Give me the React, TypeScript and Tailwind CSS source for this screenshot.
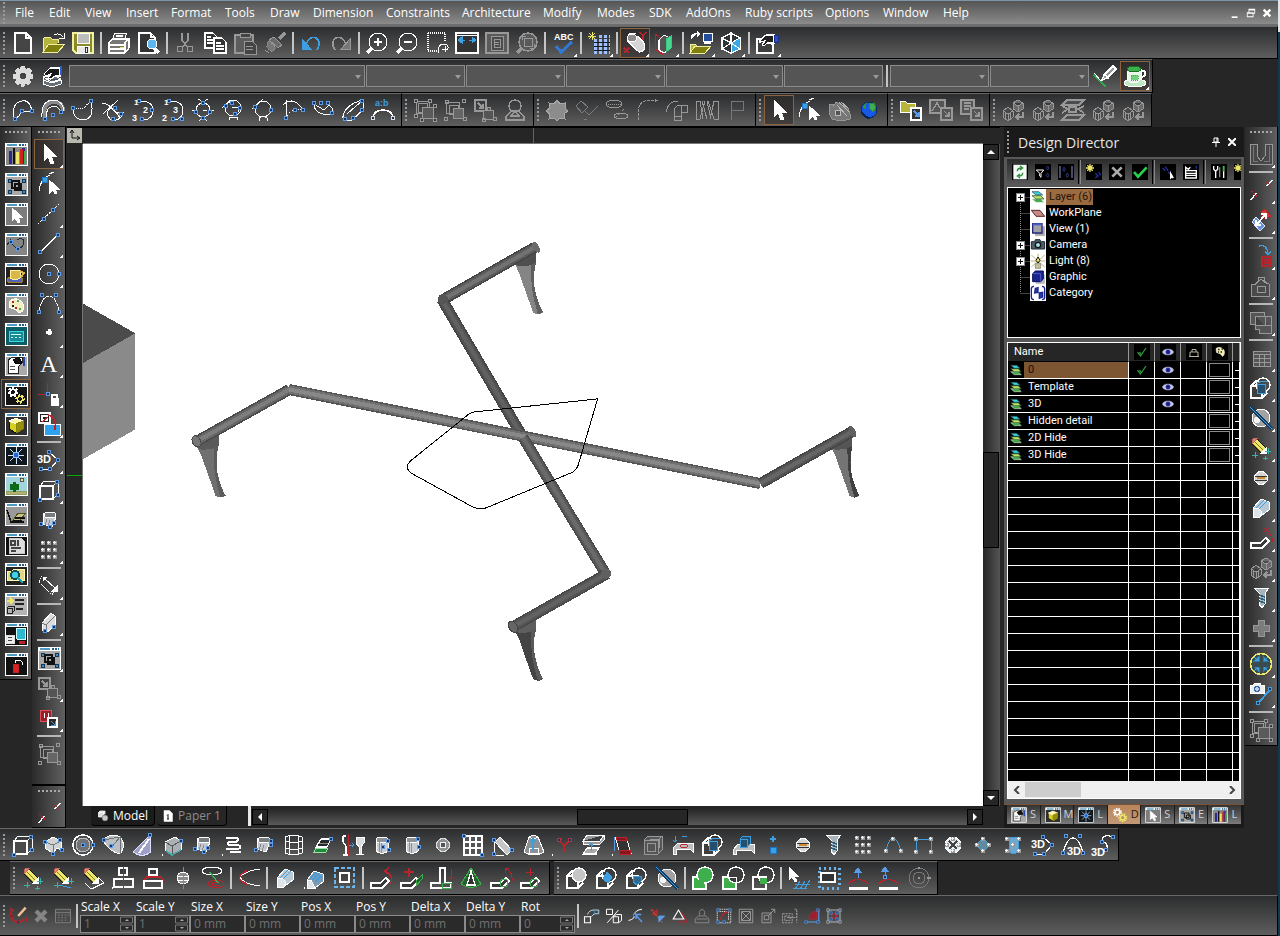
import type { ReactNode } from "react";

const BLUE = "#3d9fe0";
const NODE = "#5b9bea";
const GREY = "#989898";
const RED = "#b8242c";
const GREEN = "#3fae4c";
const YELLOW = "#ece66a";

function P({ d, c = "#fff", f = "none", w = 1, dash }: { d: string; c?: string; f?: string; w?: number; dash?: string }) {
  return <path d={d} stroke={c} fill={f} strokeWidth={w} strokeDasharray={dash} />;
}

// square handles, "x,y x,y"
function N({ p, c = NODE }: { p: string; c?: string }) {
  return (
    <>
      {p.split(" ").map((pair) => {
        const [x, y] = pair.split(",").map(Number);
        return <rect key={pair} x={x - 1.5} y={y - 1.5} width={3} height={3} fill="#16335c" stroke={c} />;
      })}
    </>
  );
}

function C({ x, y, r, c = "#fff", f = "none", w = 1 }: { x: number; y: number; r: number; c?: string; f?: string; w?: number }) {
  return <circle cx={x} cy={y} r={r} stroke={c} fill={f} strokeWidth={w} />;
}

function E({ x, y, rx, ry, c = "#fff", f = "none" }: { x: number; y: number; rx: number; ry: number; c?: string; f?: string }) {
  return <ellipse cx={x} cy={y} rx={rx} ry={ry} stroke={c} fill={f} />;
}

function T({ x, y, s = 9, c = "#fff", children }: { x: number; y: number; s?: number; c?: string; children: string }) {
  return (
    <text x={x} y={y} fontSize={s} fill={c} fontFamily="Liberation Sans, sans-serif" fontWeight={600}>
      {children}
    </text>
  );
}

function Win({ bg = "#9b9b9b", children }: { bg?: string; children?: ReactNode }) {
  return (
    <>
      <rect x={1} y={1} width={22} height={22} fill={bg} stroke="#fff" />
      <P d="M1 3h22" w={3} />
      <P d="M3 3h10" c="#4f9ac4" w={2} />
      <P d="M15 3h2M18 3h2M21 3h1" c="#235f88" w={2} />
      {children}
    </>
  );
}

function Group({ c = GREY, f = "#5a5a5a" }: { c?: string; f?: string }) {
  return (
    <>
      <P d="M3 3h13v12H3z" c={c} />
      <P d="M5 5h9v9H5z" c={c} />
      <P d="M9 9h11v11H9z" c={c} f={f} />
      <P d="M1 1h3v3H1zM15 1h3v3h-3zM1 16h3v3H1zM20 6h3v3h-3zM20 20h3v3h-3zM7 20h3v3H7z" c={c} f="#3a3a3a" />
    </>
  );
}

function Pencil() {
  return (
    <>
      <P d="M8 3L17 12L17 17L12 17L3 8Z" c="#111" f={YELLOW} />
      <P d="M6 6l9 9M4 8l9 9" c="#7d7a20" />
      <P d="M5 2h4l-6 6v-4z" c="#c9685e" f="#d8847a" />
      <P d="M17 12v5h-5z" f="#fff" />
    </>
  );
}

function Pluses() {
  return <P d="M6 16v6M3 19h6M19 12v6M16 15h6M16 20v4M14 22h5" c="#35b5a5" />;
}

function Blocks({ c = GREY }: { c?: string }) {
  return (
    <>
      <P d="M7 9l5 4v6l-5 4-5-4v-6zM2 13l5 3 5-3M7 16v7M4 14v6M9 14v6" c={c} f="#4a4a4a" />
      <P d="M17 2l5 3v6l-5 3-5-3V5zM12 5l5 3 5-3M17 8v6" c={c} f="#6a6a6a" />
      <P d="M22 14v5h-7M18 16l-3 3 3 3" c={c} w={2} />
    </>
  );
}

function Cyl({ nodes }: { nodes: string }) {
  return (
    <>
      <P d="M5 7v11q6 5 12 0V7" f="#c8ccd0" />
      <E x={11} y={7} rx={6} ry={3} f="#8b9298" />
      <P d="M8 9v10M10 10v10" c="#8b9298" />
      <N p={nodes} />
    </>
  );
}

function TiltCyl({ nodes }: { nodes: string }) {
  return (
    <>
      <P d="M7 5L19 9L15 19L6 16Z" f="#c4c8cc" />
      <E x={13} y={7} rx={6} ry={3} f="#767b80" />
      <P d="M10 11l-2 6M13 12l-2 6" c="#868b90" />
      <N p={nodes} />
    </>
  );
}

function CubeBall({ children, ball = "none" }: { children?: ReactNode; ball?: string }) {
  return (
    <>
      <P d="M2 10h11v12H2zM2 10l5-5h3M13 22l5-5" w={1.5} f="#3f3f3f" />
      <C x={14} y={9} r={7} f={ball} w={1.5} />
      {children}
    </>
  );
}

function Glass({ c = "#fff", f = "#d8dce0" }: { c?: string; f?: string }) {
  return <P d="M15 4h8v6l-3 4v7h3h-8h3v-7l-3-4z" c={c} f={f} />;
}

function Bar({ children, c = "#fff", f = "#3a3a3a" }: { children?: ReactNode; c?: string; f?: string }) {
  return (
    <>
      <P d="M2 17h9l6-5 3 3-7 7H2z" c={c} f={f} w={1.5} />
      {children}
    </>
  );
}

function Balls({ p }: { p: string }) {
  return (
    <>
      {p.split(" ").map((pair) => {
        const [x, y] = pair.split(",").map(Number);
        return (
          <g key={pair}>
            <circle cx={x} cy={y} r={2.5} fill="#9a9a9a" />
            <circle cx={x - 0.5} cy={y - 0.5} r={1.3} fill="#f2f2f2" />
          </g>
        );
      })}
    </>
  );
}

function Gear({ x, y, r, c }: { x: number; y: number; r: number; c: string }) {
  return (
    <>
      <circle cx={x} cy={y} r={r} fill="none" stroke={c} strokeWidth={r * 0.7} strokeDasharray="2 1.5" />
      <circle cx={x} cy={y} r={r * 0.7} fill="none" stroke={c} strokeWidth={r * 0.4} />
    </>
  );
}

function Layers() {
  return (
    <>
      <P d="M3 15h13l5 5H9z" c="#dfe8df" f="#3faa48" />
      <P d="M3 10h13l5 5H9z" c="#20402a" f="#b6e45e" />
      <P d="M3 4h10l6 5H9z" c="#20404a" f="#3ad0d8" />
    </>
  );
}

const ICONS: Record<string, ReactNode> = {
  new: <P d="M4 2h11l5 5v15H4zM15 2v5h5" f="#454545" w={1.5} />,
  open: (
    <>
      <P d="M2 20V8l2-2h5l2 2h6v4" c="#f0f0a0" f="#b5b53e" />
      <P d="M2 21l6-8h16l-7 8z" c="#f0f0a0" f="#80800f" />
      <P d="M13 4q5-3 9 2M23 2v5h-5" />
    </>
  ),
  save: (
    <>
      <P d="M2 2h20v20H5l-3-3z" c="#f0f0a0" f="#8a8a28" w={1.5} />
      <P d="M6 2h12v10H6z" f="#bdbdbd" />
      <P d="M6 15h12v7H6z" f="#e8e8e8" />
      <P d="M14 16h2v5h-2z" c="#333" />
    </>
  ),
  print: (
    <>
      <P d="M8 2h12l-3 7H5z" f="#555" />
      <P d="M2 11l4-3h16v9l-4 5H2zM2 14h16M2 18h16M18 11v11M18 11l4-3M9 5h7" f="#777" w={1.3} />
      <P d="M13 16h4" c={YELLOW} />
    </>
  ),
  preview: (
    <>
      <P d="M2 2h12l4 4v16H2zM14 2v4h4" f="#333" w={1.3} />
      <P d="M17 17l5 5" w={3} />
      <C x={15} y={13} r={5} f="#5db7ee" />
    </>
  ),
  cut: (
    <>
      <P d="M9 2v7l5 7M15 2v7l-5 7" c={GREY} w={1.5} />
      <C x={7} y={18} r={3} c={GREY} />
      <C x={17} y={18} r={3} c={GREY} />
    </>
  ),
  copy: (
    <>
      <P d="M2 2h8l4 4v11H2zM4 6h4M4 9h7M4 12h7" f="#333" w={1.3} />
      <P d="M11 7h8l4 4v11H11zM13 12h5M13 15h8M13 18h8" f="#333" w={1.3} />
    </>
  ),
  paste: (
    <>
      <P d="M2 4h18v18H2z" c={GREY} f="#5c5c5c" w={1.5} />
      <P d="M7 2h10v4H7z" c={GREY} f="#444" />
      <P d="M11 10h8l4 4v9H11zM13 15h7M13 18h7" c={GREY} f="#444" />
    </>
  ),
  brush: (
    <>
      <P d="M22 2l-6 6" c={GREY} w={3} />
      <P d="M11 6l8 8-4 3-9-8z" c={GREY} f="#6a6a6a" />
      <P d="M6 9l7 8-4 4-6-5z" c={GREY} f="#777" dash="1 1" />
      <P d="M2 19l4 3" c={GREY} dash="1 1" />
    </>
  ),
  undo: (
    <>
      <P d="M8 12q2-7 9-5q6 4 1 12" c={BLUE} w={1.5} />
      <P d="M3 8v10h9z" c={BLUE} f={BLUE} />
    </>
  ),
  redo: (
    <>
      <P d="M16 12q-2-7-9-5q-6 4-1 12" c={GREY} w={1.5} />
      <P d="M21 8v10h-9z" c={GREY} f="#777" />
    </>
  ),
  zoomin: (
    <>
      <P d="M7 17l-5 5" w={3} />
      <C x={13} y={11} r={9} />
      <P d="M13 7v8M9 11h8" w={1.3} />
    </>
  ),
  zoomout: (
    <>
      <P d="M7 17l-5 5" w={3} />
      <C x={13} y={11} r={9} />
      <P d="M9 11h8" w={1.3} />
    </>
  ),
  zoomwin: (
    <>
      <P d="M3 2h17v9M3 2v18h11" dash="1 1" w={1.3} />
      <P d="M13 22q0-9 5-9 6 0 5 5M17 18h6M20 15v6" />
    </>
  ),
  zoomext: (
    <>
      <P d="M1 2h22v20H1z" f="#333" w={1.5} />
      <P d="M1 4h22" />
      <P d="M3 9l4-3v6zM21 9l-4-3v6z" c={BLUE} f={BLUE} />
      <P d="M7 9h3M17 9h-3" c={BLUE} />
    </>
  ),
  zoompage: (
    <>
      <P d="M1 2h22v20H1z" c={GREY} f="#5a5a5a" w={2} />
      <P d="M6 5h12v14H6zM9 8h6v8H9zM10 11h4M10 13h4" c={GREY} f="#4b4b4b" />
    </>
  ),
  zoomsel: (
    <>
      <P d="M7 17l-5 5" c={GREY} w={3} />
      <C x={13} y={11} r={9} c={GREY} w={1.5} f="#5a5a5a" />
      <P d="M9 7h8v8H9zM7 9v-4h4M19 13v4h-4" c={GREY} />
    </>
  ),
  abc: (
    <>
      <T x={3} y={9} s={9}>ABC</T>
      <P d="M5 15l5 6L21 11" c="#2f78d8" w={3} />
    </>
  ),
  snapgrid: (
    <>
      <P d="M7 9h16M7 13h16M7 17h16M7 21h16" c="#9cc0ff" w={3} dash="3 2" />
      <P d="M12 5h11" c="#9cc0ff" w={3} dash="3 2" />
      <P d="M7 11h16M7 15h16M7 19h16" c="#10182c" />
      <P d="M5 1v8M1 5h8M2 2l6 6M8 2l-6 6" c={YELLOW} />
    </>
  ),
  paint: (
    <>
      <P d="M4 10l11-5 6 7q3 8-5 9z" f="#d5d5d5" w={1.3} />
      <E x={9} y={7} rx={5} ry={4} f="#8b8b8b" />
      <P d="M5 5q0-4 8-2" />
      <P d="M17 1l3 4 3-4M20 5v4M1 17l5 5M6 17l-5 5" c={RED} w={1.5} />
    </>
  ),
  section: (
    <>
      <P d="M2 3l7 5v15l-7-5z" c={RED} />
      <P d="M6 9l5-5 6 3v11l-6 4-5-3z" f="#555" w={1.3} />
      <P d="M13 8l5-3v12l-5 4z" c="#38c880" f="#46d890" />
    </>
  ),
  openpc: (
    <>
      <P d="M14 2h9v8h-9z" f="#244f9c" />
      <P d="M15 12h7" w={2} />
      <P d="M1 21v-8h5l2 2h9v6" c="#f0f0a0" f="#b5b53e" />
      <P d="M1 22l5-7h16l-6 7z" c="#f0f0a0" f="#80800f" />
      <P d="M2 8q0-6 6-5M8 0v6l3-3z" f="#fff" />
    </>
  ),
  cube: (
    <>
      <P d="M12 2l9 5v11l-9 4-9-4V7z" f="#2f3436" w={1.5} />
      <P d="M12 12l9-5v11l-9 4z" f="#3aa8e8" />
      <P d="M3 7l9 5M12 2v10M3 18l9-6 9 6" w={1.3} />
    </>
  ),
  hand: (
    <>
      <P d="M2 8h8l8 6v8H2z" w={1.5} f="#3f3f3f" />
      <P d="M5 9l6-5h8v8h-7l-3 3-2-1 3-4-5 1z" f="#222" w={1.3} />
      <P d="M19 4h4v7h-4z" c="#1c2d8a" f="#2850b8" />
    </>
  ),
  gear: (
    <path
      d="M10 2h4l1 3 3-1.500 3 3L19.500 9.500 22 10.500v4l-3 1 1 3-2.500 2.500-3-1-1 2.500h-3l-1-2.500-3 1L4 18.500l1-3-3-1v-4l3-1L3.500 6.500l3-3 2.500 1.500zM12 9a3 3 0 1 0 0.010 0z"
      fill="#dcdcdc"
      fillRule="evenodd"
    />
  ),
  pages: (
    <>
      <P d="M2 13l11-2 7 4-9 3zM2 13v3l9 3 9-3M2 17v3l9 3 9-3v-4" f="#667079" />
      <P d="M3 10l6-6h10v8h-5l-4 3-3-1 3-4-5 2z" f="#1a1a1a" w={1.3} />
      <P d="M20 2v9" c="#2c5ad0" w={2} />
    </>
  ),
  mark: (
    <>
      <P d="M1 11l12 12" c="#2fa448" w={1.5} />
      <P d="M9 16l2-5 9-9 3 3-9 9zM12 11l4 3" f="#999" w={1.5} />
      <P d="M1 9l7 8" />
    </>
  ),
  cup: (
    <>
      <E x={12} y={19} rx={11} ry={4} f="#bfe8c4" />
      <P d="M4 5q8-5 14 0v8q-1 6-7 6t-7-6z" f="#e9f7ea" />
      <E x={11} y={5} rx={7} ry={3} c="#157026" f={GREEN} />
      <P d="M18 7q6-1 4 4l-4 3" w={2} />
      <P d="M8 11h7v5H8z" c={GREEN} f="#73d07c" dash="1 1" />
    </>
  ),
  arc1: (
    <>
      <P d="M3 21Q0 11 6 5q12-7 15 8H11l-3 5-4 3" />
      <N p="4,21 11,13 21,13" />
    </>
  ),
  arc2: (
    <>
      <P d="M4 19Q1 6 12 4q10 0 10 9" w={4} c="#8a8a8a" />
      <P d="M1 19Q0 2 13 2q9 1 10 11M6 19q-2-9 6-11 5 0 7 5" />
      <N p="4,21 12,17 20,14" />
    </>
  ),
  arc3: (
    <>
      <P d="M2 10q0 12 11 12Q24 20 20 3" />
      <P d="M3 10h10l7-8" dash="1 1" />
      <N p="2,10 20,3" />
    </>
  ),
  arc4: (
    <>
      <P d="M1 5q10 1 18 15M2 16L17 2M23 14h-9l-4-4q-7 4-1 11 8 4 13-5" />
      <N p="12,21 20,16 14,10" />
    </>
  ),
  arc5: (
    <>
      <P d="M8 3q14 0 14 9t-9 10" />
      <N p="8,3 21,12 11,21" />
      <T x={3} y={7} s={8}>1</T>
      <T x={12} y={15} s={9}>2</T>
      <T x={1} y={23} s={9}>3</T>
    </>
  ),
  arc6: (
    <>
      <P d="M8 3q14 0 14 9t-9 10" />
      <N p="8,3 21,21 12,21" />
      <T x={3} y={7} s={8}>1</T>
      <T x={12} y={15} s={9}>3</T>
      <T x={1} y={23} s={9}>2</T>
    </>
  ),
  arc7: (
    <>
      <C x={12} y={12} r={7} />
      <P d="M1 12h5M18 12h5M7 1l5 3M17 1l-5 3M12 12h4M8 23l4-4 4 4" />
      <N p="12,5 5,14 19,14 12,20" />
    </>
  ),
  arc8: (
    <>
      <C x={12} y={10} r={8} />
      <P d="M1 10L11 2M8 22v-3h8v3M11 9h6v5" />
      <N p="5,8 11,5 19,10 14,16" />
    </>
  ),
  arc9: (
    <>
      <C x={12} y={11} r={8} />
      <P d="M8 23v-3l2-1M16 23v-3l-2-1M1 11L12 1" />
      <N p="4,9 20,12" />
    </>
  ),
  arc10: (
    <>
      <P d="M2 7Q13-3 22 12M5 2v18" />
      <P d="M5 20q5-12 17-8" dash="1 1" />
      <N p="5,20 14,12 22,12" />
    </>
  ),
  arc11: (
    <>
      <P d="M3 6q0 8 9 10 9 1 10-2 0-4-4-7l-5 5z" />
      <N p="3,5 10,5 17,5 21,15" />
    </>
  ),
  arc12: (
    <>
      <P d="M22 2v10L11 22q-10 2-9-4Q5 6 22 2L6 16" />
      <N p="21,3 21,12 12,20 4,21" />
    </>
  ),
  arc13: (
    <>
      <P d="M2 21q0-9 10-9t10 9" w={1.5} />
      <N p="2,20 22,20" c="#ddd" />
      <T x={4} y={8} s={9} c={BLUE}>a:b</T>
    </>
  ),
  group: <Group />,
  group2: (
    <>
      <P d="M3 4h13v11H3zM6 7h9v9H6z" c={GREY} />
      <P d="M10 10h10v10H10z" c={GREY} f="#666" />
      <P d="M2 2h3v3H2zM19 1h3v3h-3zM1 19h3v3H1zM20 19h3v3h-3z" c={GREY} />
    </>
  ),
  group3: (
    <>
      <P d="M2 2h11v11H2zM5 5l5 5M10 6v4H6" c={GREY} w={1.5} />
      <P d="M10 12h10v9H10zM14 9h3v3h-3zM20 19h3v3h-3zM9 20h3v3H9z" c={GREY} f="#555" />
    </>
  ),
  stamp: (
    <>
      <C x={12} y={8} r={6} c={GREY} w={1.5} />
      <P d="M3 19l5-6h8l5 6v3H3zM8 18l4-5 4 5z" c={GREY} w={1.5} />
    </>
  ),
  star: <P d="M12 2l3 4 5-1v5l3 3-4 3 1 5-5-1-3 3-3-3-5 1 1-5-4-3 4-3-1-5 5 1z" c="#aaa" f="#8c8c8c" />,
  rect45: <P d="M1 8l5-5 7 6-6 6zM23 8l-9 9-5-5 M9 21h3" c="#7c7c7c" />,
  ellipses: (
    <>
      <E x={9} y={6} rx={8} ry={4} c={GREY} />
      <E x={16} y={18} rx={7} ry={3} c={GREY} />
      <P d="M3 6h14M10 20l9-9" c={GREY} dash="1 1" />
    </>
  ),
  fillet: <P d="M3 22v-9Q4 3 14 2h9M20 1v4" c={GREY} dash="3 1" />,
  elbow: <P d="M1 14Q3 3 13 3M9 22v-9q1-6 7-6h6v7h-6v8zM9 18h7M16 7v7" c={GREY} />,
  coil: <P d="M1 3h4l3 18M1 3v18h4M7 3l5 18M12 3l4 18M23 3h-4l-4 18M23 3v18h-4l-6-18M10 3L5 21" c={GREY} />,
  flag: <P d="M6 22V3h12v9H6" c="#777" />,
  arrow: <P d="M7 2v17l4-4 3 7 3-1-3-7h5z" f="#fff" />,
  nodearrow: (
    <>
      <P d="M2 19q1-12 11-16" />
      <P d="M12 8v14l4-4 2 4 2-1-2-4h4z" f="#fff" />
      <P d="M5 5h5v5H5z" c="#1a78cc" f={BLUE} />
      <P d="M12 2l5-2" />
    </>
  ),
  handgrab: (
    <>
      <P d="M2 6h4v3l3-5 12 6 2 6v5q-10 3-18 0L2 15z" c={GREY} f="#777" />
      <P d="M12 4l10 10M14 4l7 6M10 7l10 11" c="#bbb" />
      <C x={11} y={15} r={3} c="#bbb" f="#555" />
    </>
  ),
  globe: (
    <>
      <C x={12} y={12} r={8} c="#102a6a" f="#1858e8" />
      <P d="M12 5h5l2 5-3 4-3-3zM6 8l3-2-1 5z" c="#2c8a3a" f={GREEN} />
      <P d="M5 14q3 6 8 6" c="#0a2458" w={2} />
    </>
  ),
  flayer: (
    <>
      <P d="M1 14V3h5l2 2h8v9z" c="#fff" f="#b9b53a" />
      <P d="M12 10h10v12H12z" w={1.5} f="#333" />
      <P d="M15 13l5 5M20 14v4h-4" c={NODE} w={1.5} />
    </>
  ),
  fimage: (
    <>
      <P d="M1 2h15v13H1zM3 13l5-8 5 8" c={GREY} w={1.5} f="#555" />
      <P d="M12 10h11v12H12zM15 13l5 5M20 14v4h-4" c={GREY} f="#555" w={1.3} />
    </>
  ),
  fpage: (
    <>
      <P d="M2 2h13v14H2zM5 5h7M5 8h7M5 11h5" c={GREY} w={1.5} f="#555" />
      <P d="M12 10h11v12H12zM15 13l5 5M20 14v4h-4" c={GREY} f="#555" w={1.3} />
    </>
  ),
  blocks: <Blocks />,
  slabs: <P d="M6 2h17l-5 5H1zM6 17h17l-5 5H1zM1 8l6 3-6 4M23 8l-6 3 6 4M8 9h7v5H8z" c={GREY} w={1.5} f="#4d4d4d" />,

  // palette windows on the far left
  wbars: (
    <Win bg="#8a8a8a">
      <P d="M6 22V9M19 22V6" c="#2a2a90" w={3} />
      <P d="M10 22V6" c="#111" w={2} />
      <P d="M13 22V10" c={YELLOW} w={3} />
      <P d="M17 22V7" c="#c22" w={3} />
      <P d="M21 22V9" c={GREEN} w={2} />
    </Win>
  ),
  wgroup: (
    <Win bg="#a8a8a8">
      <P d="M4 7h3v3H4zM18 7h3v3h-3zM4 18h3v3H4zM18 18h3v3h-3z" c="#10385a" f="#4f8ab8" />
      <P d="M8 9h7v7H8zM11 12h6v6h-6z" c="#111" w={1.5} />
    </Win>
  ),
  warrow: (
    <Win bg="#7d7d7d">
      <P d="M8 6v13l3-3 3 5 2-1-2-5h4z" f="#fff" />
    </Win>
  ),
  wnodes: (
    <Win bg="#858585">
      <P d="M6 10l8 8M3 13l4-6M13 8q6-3 7 1 0 5-5 8" c="#1a2a40" />
      <N p="7,10 14,17" />
    </Win>
  ),
  wcup: (
    <Win bg="#222">
      <E x={11} y={18} rx={8} ry={3} c="#a67c28" f="#5064b8" />
      <P d="M6 8h10v8q-5 3-10 0z" c="#fff0a0" f="#d8b848" />
      <P d="M16 9l4 2-3 4" c="#d8b848" w={2} />
    </Win>
  ),
  wpalette: (
    <Win bg="#a0a0a0">
      <P d="M6 9q6-5 12 1 5 8-3 11l-3-3-7-3z" c="#fff" f="#f2efc4" />
      <P d="M8 10h2M11 16h2" c={RED} w={2} />
      <P d="M13 9h2M15 17h2" c={GREEN} w={2} />
      <P d="M8 14h2" c="#222" w={2} />
    </Win>
  ),
  wsheet: (
    <Win bg="#0b5e66">
      <P d="M5 9h14v10H5z" c="#3cd8e0" f="#178c96" />
      <P d="M7 12h10M7 15h2M11 15h2M15 15h2" c="#d2ffff" />
    </Win>
  ),
  wdoc: (
    <Win bg="#aaa">
      <P d="M4 8l5-3h9v6l-4 4v6H4z" c="#222" f="#fff" />
      <P d="M9 8l6-3 3 6-6 1z" c="#000" f="#111" />
      <P d="M6 14h5M6 17h5" c="#555" />
      <P d="M20 5v9" c="#2548a8" w={2} />
    </Win>
  ),
  wgears: (
    <Win bg="#141414">
      <Gear x={9} y={10} r={4} c="#fff" />
      <Gear x={16} y={17} r={3.5} c={YELLOW} />
    </Win>
  ),
  gears: (
    <>
      <Gear x={8} y={8} r={5} c="#fff" />
      <Gear x={16} y={16} r={5} c={YELLOW} />
    </>
  ),
  wcube: (
    <Win bg="#303030">
      <P d="M12 6l7 3v8l-7 4-7-4V9z" c="#111" f="#d8d020" />
      <P d="M5 9l7 3 7-3-7-3z" c="#fff" f="#fff7a0" />
      <P d="M12 12l7-3v8l-7 4z" c="#8a8408" f="#96900c" />
    </Win>
  ),
  wstar: (
    <Win bg="#101820">
      <P d="M12 5v17M4 13h16M6 7l12 12M18 7L6 19" c="#cfe4ff" />
      <C x={12} y={13} r={3} c="#8fc2ff" f="#2468d0" />
    </Win>
  ),
  wtree: (
    <Win bg="#a4d4dc">
      <P d="M2 19h20v3H2z" c="#8aa060" f="#b8b070" />
      <P d="M10 20v-10M7 12v4h6v-4" c="#0f6a1a" w={3} />
      <C x={18} y={8} r={2} c="#555" f={YELLOW} />
    </Win>
  ),
  wroad: (
    <Win bg="#9a9a9a">
      <P d="M8 20l6-9h8l-8 9z" c="#554f20" f="#c9c286" />
      <P d="M3 8l4 12h13M11 16h10M9 19h9" c="#111" w={1.5} />
    </Win>
  ),
  wpage: (
    <Win bg="#111">
      <P d="M5 6h12l3 3v12H5z" c="#ccc" f="#ddd" />
      <P d="M7 9h4v4H7zM14 8v6M7 16h10M7 19h5" c="#444" w={1.5} />
    </Win>
  ),
  wfind: (
    <Win bg="#222">
      <P d="M3 18V9h5l2-2h10v11z" c="#fff8b0" f="#e0d888" />
      <C x={11} y={13} r={4} c="#144a5a" f="#40d0e0" w={2} />
      <P d="M14 16l5 5" c="#1da0b0" w={2} />
    </Win>
  ),
  wlist: (
    <Win bg="#b4b4b4">
      <P d="M3 9h6M6 6l3 3-3 3" c={YELLOW} w={2} />
      <P d="M11 8h9M11 12h9M12 17h7" c="#222" w={1.5} />
      <P d="M3 16h5v5H3zM3 16l2-2h5v5l-2 2" c="#222" />
    </Win>
  ),
  wmix: (
    <Win bg="#111">
      <P d="M12 6h9v11h-8z" c="#cff" f="#30b8d0" />
      <P d="M2 13h8v8H2z" c="#ddd" f="#eee" />
      <P d="M4 15h4M4 18h4" c="#444" />
      <P d="M15 19h5v2h-5z" c={RED} f={RED} />
    </Win>
  ),
  wcan: (
    <Win bg="#111">
      <P d="M9 12h5v8H9z" c={RED} f="#e02020" />
      <P d="M11 11V8h5l2 2v3" c="#fff" />
    </Win>
  ),

  // drawing tools
  line1: (
    <>
      <P d="M1 22L23 1" dash="2 1" />
      <N p="7,17 16,8" />
    </>
  ),
  line2: (
    <>
      <P d="M3 20L21 3" w={1.5} />
      <N p="3,20 21,3" />
    </>
  ),
  circle: (
    <>
      <C x={12} y={12} r={10} />
      <N p="12,12 22,12" />
    </>
  ),
  curve: (
    <>
      <P d="M2 19Q5 4 12 4t10 15" dash="4 1" />
      <N p="2,20 22,20 5,3 19,3" />
    </>
  ),
  point: <P d="M12 7v6M9 10h6" w={3} />,
  text: <text x={3} y={20} fontSize={24} fill="#fff" fontFamily="Liberation Serif, serif">A</text>,
  lock: (
    <>
      <P d="M10 1v12M1 12h10" c={RED} />
      <N p="11,12" />
      <P d="M14 16h7v7h-7z" f="#fff" />
      <P d="M15 16v-3h5v3" w={1.5} />
    </>
  ),
  copyrect: (
    <>
      <P d="M7 12h16v11H7z" c="#fff" f="#2da2ee" />
      <P d="M2 1h11v10H2zM5 4h5v4H5z" f="#222" w={1.5} />
      <P d="M11 3q9 2 7 15M6 10l4-5" c={RED} w={1.5} />
    </>
  ),
  poly3d: (
    <>
      <P d="M12 4l9 8-8 9H4" />
      <N p="12,4 21,12 4,21 13,21" />
      <T x={0} y={15} s={11}>3D</T>
    </>
  ),
  box: (
    <>
      <P d="M3 8h13v13H3z" f="#4a4a4a" w={2} />
      <P d="M3 8l4-5h14v13l-5 5M16 8l5-5" />
      <N p="3,22 20,4 21,17" />
    </>
  ),
  tilt: <TiltCyl nodes="4,16 13,19 17,15" />,
  dots9: <Balls p="6,5 12,5 18,5 6,12 12,12 18,12 6,19 12,19 18,19" />,
  dim: (
    <>
      <P d="M2 8l3-6M2 8l13 13M21 12l-6 9" dash="2 1" />
      <P d="M7 4l12 11M6 3h4l-4 4zM20 17h-5l5-5z" f="#fff" />
    </>
  ),
  wall: (
    <>
      <P d="M5 13L14 3l4 3v10l-9 7-4-3z" f="#ddd" />
      <P d="M5 13l4 2 9-9M9 15v8" c="#777" />
      <N p="8,21 17,17" />
    </>
  ),
  swap: (
    <>
      <P d="M3 4h11v11H3z" c="#e05058" f="#98202a" />
      <P d="M7 7v5M11 7v5" />
      <P d="M11 12h9v9h-9z" f="#2a2a2a" w={1.3} />
      <P d="M14 15l4 4M18 15v4h-4" c={BLUE} />
    </>
  ),
  pins: (
    <>
      <P d="M23 2l-5 6M2 22l5-7" w={1.5} />
      <P d="M14 8l4-4 4 5M2 13l7 6" c={RED} w={1.3} dash="2 1" />
    </>
  ),

  // solids
  polybox: (
    <>
      <P d="M4 9l8-5 8 4v9l-4-2-4 5-7-4z" f="#cfd3d6" />
      <P d="M4 9l8 3 8-4M12 12v8" c="#777" />
      <N p="4,9 19,7 12,21 21,17" />
    </>
  ),
  sphere: (
    <>
      <C x={12} y={12} r={10} f="#4c4f52" w={1.5} />
      <C x={12} y={12} r={7} c="#bbb" f="#6e7275" />
      <N p="12,12 22,12" />
    </>
  ),
  fan: (
    <>
      <P d="M2 7q8-8 17-3 7 8 0 17-12-3-17-14z" f="#babfc2" />
      <P d="M2 7l17-3M10 15l9-11v17" c="#6a7074" />
      <N p="3,7 10,13" />
    </>
  ),
  cone: (
    <>
      <P d="M19 2L2 19q9 7 18 0z" c="#dfe0ff" f="#9ea0c8" />
      <P d="M18 6l-10 14" w={2} />
      <N p="19,2" />
    </>
  ),
  prism: (
    <>
      <P d="M4 9l10-5 6 4v9l-9 5-6-4z" f="#aab0b4" />
      <P d="M4 9l7 4 9-5M11 13v9" c="#555" />
      <P d="M5 18l6 4 9-5" c="#40a8a8" w={1.5} />
      <N p="20,8" />
      <P d="M1 22h1" w={2} />
    </>
  ),
  spring: (
    <>
      <P d="M5 5h10q5 1 0 4H8q-3 2 0 3h9q5 2 0 4H5M9 19h11" w={2} />
      <P d="M1 22h1" w={2} />
    </>
  ),
  tilt2: <TiltCyl nodes="20,8 5,17 20,12" />,
  barrel: <P d="M4 4q8-4 17 0v16q-8 4-17 0zM4 8q8 3 17 0M4 15q8 3 17 0M8 3v18M17 3v18" />,
  slab: (
    <>
      <P d="M5 14L10 6h10l-4 8z" f="#2a2a2a" w={1.3} />
      <P d="M3 19l2-4h12l-2 4z" c="#9fe0a8" f="#1f8a38" />
      <P d="M8 10h9" c="#888" />
      <N p="20,6" />
    </>
  ),
  glasses: (
    <>
      <P d="M2 3v6l3 4v9M2 22h6M2 3h3" w={1.3} />
      <P d="M7 1v22" c={RED} />
      <P d="M8 12h5M11 10l2 2-2 2" c={BLUE} />
      <Glass />
    </>
  ),
  cylcut: <Cyl nodes="17,8 12,14 18,17" />,
  cyl: <Cyl nodes="17,6 18,14" />,
  torus: (
    <>
      <C x={12} y={12} r={6.5} f="#8d9194" c="#ddd" />
      <C x={12} y={12} r={3} c="#eee" f="#555" />
    </>
  ),
  mesh: (
    <>
      <P d="M3 3h18v19H3zM3 9h18M3 15h18M9 3v19M15 3v19" w={1.3} f="#555" />
      <N p="3,3 21,22" />
    </>
  ),
  plate: (
    <>
      <P d="M4 9L9 4l12 13-5 5z" f="#c6c6c6" />
      <P d="M3 7v15h10" />
      <N p="3,7 3,21 21,17" />
    </>
  ),
  loft: (
    <>
      <P d="M8 4q4-3 9 0l6 15q-10 6-20 0z" f="#8d9194" />
      <P d="M8 4q4 3 9 0M8 15h9v5H8z" />
      <P d="M12 18V7M10 9l2-3 3 3" c={BLUE} w={2} />
    </>
  ),
  branch: (
    <>
      <P d="M13 19v-6L9 8M13 13l5-5M11 6H8v3M17 6h3v3" c={RED} w={1.5} />
      <N p="8,7 19,7" c="#b0334a" />
      <P d="M1 22h1" w={2} />
    </>
  ),
  stack: (
    <>
      <P d="M6 2h17l-4 6H2zM2 8v3h17l4-4V2" f="#999" />
      <P d="M6 15h12l-4 6H2zM2 21h14" f="#aaa" w={1.3} />
      <P d="M10 18v-7M8 13l2-3 2 3" c={BLUE} />
    </>
  ),
  redpara: (
    <>
      <P d="M4 4h11l5 16H9z" f="#333" />
      <P d="M5 4h10l1 3H6z" c={RED} f="#83161f" />
      <P d="M8 17h11l1 4H9z" c={RED} f="#83161f" />
      <P d="M3 4v14" c={NODE} />
      <P d="M1 22h1" w={2} />
    </>
  ),
  wirebox: (
    <>
      <P d="M3 7l4-4h14v14l-4 4H3z" c={GREY} f="#555" />
      <P d="M3 7h14v14M17 7l4-4M6 10h8v8H6zM9 6h9v9" c={GREY} />
    </>
  ),
  punch: (
    <>
      <P d="M2 21v-6l5-5h15v9l-3-3H5v5z" f="#bdbdbd" />
      <E x={13} y={13} rx={4} ry={1.5} c={RED} />
      <P d="M4 3v6M2 7l2 2 2-2M11 3h5" c={BLUE} />
    </>
  ),
  cubes: (
    <CubeBall>
      <P d="M8 8h8v9H8zM8 8l4-3h7" c={BLUE} f="#24506e" />
    </CubeBall>
  ),
  emboss: (
    <>
      <P d="M2 21v-4l5-6h16v9l-3-3H5v4z" f="#bdbdbd" />
      <P d="M9 6h7v8H9zM9 6l3-3h7v8l-3 3" c={BLUE} f="#24506e" />
    </>
  ),
  bluept: (
    <>
      <P d="M12 3v6M9 6h6" c={BLUE} w={1.3} />
      <P d="M9 14h6v6H9z" c="#1876c4" f={BLUE} />
    </>
  ),
  slotball: (
    <>
      <C x={12} y={12} r={6.5} f="#d4d4d4" />
      <P d="M6 10h12M6 14h12" c="#333" />
      <P d="M8 12h8" c="#d08a38" w={1.5} />
    </>
  ),
  screw: (
    <>
      <P d="M5 2h15l-4 5v11l-3 4-3-4V7z" f="#a8b4bc" />
      <P d="M10 9l6 2M10 12l6 2M10 15l6 2" c="#2d5e78" w={1.5} />
    </>
  ),
  balls3: (
    <>
      <P d="M5 18Q8 5 12 5t8 13" c={BLUE} />
      <Balls p="5,18 12,6 20,18" />
    </>
  ),
  balls4: (
    <>
      <P d="M5 19V6h15v13" c={BLUE} />
      <Balls p="5,6 20,6 5,19 20,19" />
    </>
  ),
  balls5: (
    <>
      <C x={12} y={12} r={8} f="#e4f2f6" />
      <P d="M8 8l8 8M16 8l-8 8" c="#444" w={2} />
      <Balls p="12,6 6,12 18,12 12,18" />
    </>
  ),
  balls6: (
    <>
      <P d="M12 5l7 7-7 7-7-7z" c={BLUE} f="#5f8ba0" />
      <Balls p="12,6 6,12 18,12 12,18" />
    </>
  ),
  balls7: (
    <>
      <P d="M8 5q5-2 9 0v14q-5 3-9 0z" c={BLUE} f="#6fa8cc" />
      <Balls p="6,6 18,6 12,12 6,18 18,18" />
    </>
  ),
  curve3d: (
    <>
      <P d="M2 19Q6 5 12 5t10 14" w={1.3} />
      <N p="5,3 19,3 2,20 22,20" />
      <T x={6} y={22} s={11}>3D</T>
    </>
  ),
  spiral3d: (
    <>
      <P d="M22 4q-10-4-11 4 8 3 4 10" w={1.3} />
      <N p="22,4 11,9 15,17" />
      <T x={0} y={23} s={11}>3D</T>
    </>
  ),

  // editing
  pen1: (
    <>
      <Pencil />
      <Pluses />
    </>
  ),
  pen2: (
    <>
      <Pencil />
      <P d="M8 19l12 3" c={BLUE} />
      <P d="M6 16v6M3 19h6M20 12v6M17 15h6" c="#35b5a5" />
    </>
  ),
  pen3: (
    <>
      <P d="M4 17l6 6 13-6-5-5" w={1.3} />
      <Pencil />
    </>
  ),
  align: (
    <>
      <P d="M8 2h8v7H8zM3 13h19v8H3z" w={1.5} />
      <P d="M12 0v24" c={RED} />
      <P d="M1 22h1" w={2} />
    </>
  ),
  align2: (
    <>
      <P d="M8 3h8v6H8zM3 15h18v7H3z" w={1.5} />
      <P d="M5 11h15l3 4M3 14l3-3" c={RED} w={1.5} />
    </>
  ),
  rotball: (
    <>
      <C x={12} y={12} r={6} f="#8c8c8c" />
      <P d="M6 10h12M6 14h12" />
      <P d="M12 1v22" c={BLUE} dash="5 1" />
    </>
  ),
  rings: (
    <>
      <E x={11} y={5} rx={10} ry={4} />
      <E x={15} y={18} rx={8} ry={4} c={RED} />
      <E x={15} y={18} rx={4} ry={2} c={RED} />
      <P d="M9 6l8 11" c={GREEN} w={1.5} />
    </>
  ),
  hyper: (
    <>
      <P d="M23 3Q8 5 3 11q3 7 20 9" />
      <P d="M10 5Q-5 12 10 18" c={RED} w={1.5} />
    </>
  ),
  chamf: (
    <>
      <P d="M4 12l8-9 8 3v8l-8 6-8 1z" f="#b8c8d4" />
      <P d="M7 12l8-8M10 13l8-8" c={BLUE} />
      <P d="M4 12h5l4 4-2 5H4z" f="#dfe4e8" />
    </>
  ),
  chamf2: (
    <>
      <P d="M4 14l7-9 9 3v8l-8 6z" f="#7e98b2" />
      <P d="M8 12l5-6M10 14l6-7M12 16l6-6" c={BLUE} w={1.5} />
      <P d="M4 14h4l4 8H4z" f="#dfe4e8" />
      <P d="M1 22h1" w={2} />
    </>
  ),
  frame: (
    <>
      <P d="M2 2h19v19H2z" c="#6cb6f0" w={2} dash="4 2" />
      <P d="M7 7h9v9H7z" w={2} />
    </>
  ),
  bend1: (
    <Bar>
      <P d="M22 18q3-9-6-13M20 2l-4 3 3 3" c={RED} w={1.5} />
    </Bar>
  ),
  bend2: (
    <Bar>
      <P d="M10 2v9M5 6h10" c={RED} w={1.5} />
      <P d="M17 20l6-7v-4l-6 6z" c={GREEN} f="#1e5a2a" />
    </Bar>
  ),
  bend3: (
    <>
      <P d="M2 17h9V2h5v15h6v5H2z" w={1.5} />
      <P d="M13 17h9v5h-9z" c={GREEN} />
      <P d="M22 3v10M20 11l2 2 2-2" c={RED} />
    </>
  ),
  cone2: (
    <>
      <P d="M12 2L2 18q10 7 20 0z" c={GREEN} f="#21632e" />
      <P d="M12 5L8 19h8z" f="#333" w={1.3} />
    </>
  ),
  bend4: (
    <Bar>
      <C x={15} y={17} r={4} c={GREEN} />
      <P d="M23 15q1-9-6-12M20 2l-4 1 1 4" c={RED} />
    </Bar>
  ),
  bend5: (
    <Bar>
      <C x={15} y={17} r={4} c={GREEN} />
      <P d="M11 2v8M7 6h8" c={RED} />
    </Bar>
  ),
  bool1: <CubeBall ball="#c6c6c6" />,
  bool2: (
    <CubeBall>
      <P d="M12 6l5 5-4 6-5-4z" c={BLUE} f={BLUE} />
    </CubeBall>
  ),
  bool3: (
    <CubeBall>
      <P d="M8 10h8v5l-4 4-4-3z" c={BLUE} f="#2c6a94" />
    </CubeBall>
  ),
  cutball: (
    <>
      <C x={12} y={12} r={9} f="#a2a2a2" />
      <circle cx={8} cy={14} r={3} fill="#f4f4f4" />
      <P d="M1 1l22 22" c="#143a60" w={3} />
      <P d="M1 1l22 22" c={BLUE} />
    </>
  ),
  add: (
    <>
      <P d="M2 11h13v12H2z" f={GREEN} w={1.5} />
      <C x={14} y={9} r={8} f={GREEN} w={1.5} />
      <P d="M3 14h9v7H3z" c={GREEN} f={GREEN} />
    </>
  ),
  sub: (
    <>
      <P d="M2 11h13v12H2z" f={GREEN} w={1.5} />
      <C x={15} y={9} r={8} f="#3c3c3c" w={1.5} />
      <P d="M8 11h7v5" />
    </>
  ),
  inter: (
    <>
      <P d="M2 11h13v12H2z" w={1.5} />
      <C x={15} y={9} r={8} w={1.5} />
      <P d="M9 12h6v5H9z" c={GREEN} f={GREEN} />
    </>
  ),
  pickface: (
    <>
      <P d="M2 1v13l3-3 3 5 2-1-3-5h4z" f="#fff" />
      <P d="M8 18h15M6 22h14M8 23l5-8M13 23l5-8M18 22l5-8" c={BLUE} />
    </>
  ),
  frame2: (
    <>
      <P d="M2 2h20v20H2z" c="#6cb6f0" w={3} dash="2 3" />
      <P d="M4 7h14v9H4z" f="#333" w={2} />
    </>
  ),
  push1: (
    <>
      <P d="M2 22h19" w={3} />
      <P d="M1 18q10-9 21 0" c={RED} w={1.3} dash="4 1" />
      <P d="M11 12V3M8 6l3-4 3 4z" c={NODE} f={NODE} />
    </>
  ),
  push2: (
    <>
      <P d="M2 22h19" w={3} />
      <P d="M1 18q10-9 21 0" c={RED} w={1.3} dash="4 1" />
      <P d="M8 12V3M5 5l3-4 3 4z" c={NODE} f={NODE} />
      <N p="8,11" />
    </>
  ),
  target: (
    <>
      <C x={12} y={12} r={10} c="#777" />
      <C x={12} y={12} r={6} c="#777" />
      <P d="M11 12h2M20 12h4M12 1v2" c="#999" w={2} />
    </>
  ),

  // right hand toolbar
  ushape: (
    <>
      <P d="M1 2h7v12l4 5 4-5V2h7v20H1z" c={GREY} f="#484848" />
      <P d="M4 4v15h5M20 4v15h-5" c="#777" />
    </>
  ),
  split: (
    <>
      <P d="M3 14l4-5 9 9-5 5z" c="#dfe8ff" f="#6a94dc" />
      <P d="M12 4l4-3 6 7-6 3z" c={RED} f="#d23a30" />
      <P d="M8 16l8-9M12 6h5v5M7 12v5h5" w={2} />
    </>
  ),
  rectrot: (
    <>
      <P d="M13 13h9v9h-9zM16 16h3v3h-3z" c={RED} w={1.5} />
      <P d="M10 2q8-2 9 8M16 7l3 4 3-4" c={BLUE} w={1.3} />
    </>
  ),
  house: <P d="M2 10h5l2-3v-4h6v4l5 3v12H2zM8 12h8v6H8zM6 10l6-5 6 5" c={GREY} f="#4a4a4a" />,
  copies: <P d="M1 2h14v4h7v17H10v-4H6v-5H1zM6 6h10v9h6M6 6v9h10" c={GREY} f="#555" />,
  table: (
    <>
      <P d="M4 5h17v15H4z" c={GREY} f="#555" />
      <P d="M4 8h17M10 8v12M15 8v12M4 12h17M4 16h17" c={GREY} />
    </>
  ),
  bar: (
    <Bar>
      <P d="M23 16q1-7-5-9M15 2l5 4M20 2l-5 4" c={RED} w={1.3} />
    </Bar>
  ),
  plus: <P d="M9 4h6v5h5v6h-5v5H9v-5H4V9h5z" c={GREY} f="#7c7c7c" />,
  collapse: (
    <>
      <C x={12} y={12} r={10.5} c={YELLOW} f="#3a4c50" w={1.5} />
      <P d="M5 9h5V4zM14 4v5h5zM5 15h5v5zM14 20v-5h5z" c="#2a7ca8" f={BLUE} />
      <P d="M5 5l4 4M19 5l-4 4M5 19l4-4M19 19l-4-4" c={BLUE} />
    </>
  ),
  camera: (
    <>
      <P d="M1 3h3l2-2h5l1 2h3v8H1z" f="#eee" />
      <C x={8} y={7} r={2.5} c="#3868a8" f="#c0d0e8" w={1.5} />
      <P d="M10 20L21 8" c={BLUE} w={2} />
      <N p="9,21 21,7" c={BLUE} />
    </>
  ),

  // status row
  snap: (
    <>
      <P d="M4 4q-5 8 1 13 8 6 13-2" c={RED} w={2} />
      <P d="M1 3l5 3M20 13l1 6" c={RED} w={2} />
      <P d="M20 2l-9 10" c="#f0c090" w={3} />
      <N p="11,19 3,12" c={RED} />
    </>
  ),
  cross: <P d="M6 6l12 12M18 6L6 18" c="#858585" w={5} />,
  sheet: <P d="M3 4h18v16H3zM3 8h18M6 11h2M10 11h2M14 11h2M18 11h2M6 14h2M10 14h2M14 14h2M6 17h2M10 17h2M14 17h2" c="#858585" f="#4a4a4a" />,
  s1: (
    <>
      <P d="M2 13h8v8H2z" w={1.5} />
      <P d="M6 10q2-6 9-6h6v5h-6l-4 4" />
      <P d="M15 3v8M20 3v6" c={BLUE} />
    </>
  ),
  s2: <P d="M2 3h8v7H2zM11 13h7v8h-7zM11 13l4-3h7v8l-4 3M3 21L18 4" w={1.3} />,
  s3: (
    <>
      <P d="M2 18q9-2 8-8 1-6 10-7" w={1.3} />
      <P d="M12 11l8 9M12 16v-6h7" c={NODE} w={2} />
      <N p="10,11" />
    </>
  ),
  s4: (
    <>
      <P d="M3 2l8 8M5 10h6V4z" c={RED} f={RED} w={2} />
      <P d="M13 12h8l-8 8z" c={NODE} f={NODE} />
      <P d="M3 4l16 18" c="#e0a040" dash="2 2" />
    </>
  ),
  s5: (
    <>
      <P d="M10 4l7 12H3z" w={1.5} />
      <P d="M15 8l7 12H9" c={RED} w={1.5} />
    </>
  ),
  s6: <P d="M12 3q5 2 3 7l6 6v5H3v-5l6-6q-2-5 3-7zM5 16h14M8 12h8" c={GREY} />,
  s7: (
    <>
      <P d="M3 3h18v18H3zM6 6h12v12" dash="2 1" />
      <P d="M8 17q0-9 10-11" c={RED} w={2} />
      <N p="4,4 20,4 4,20 12,20" />
    </>
  ),
  s8: <P d="M3 3h18v18H3zM6 6h12v12H6zM6 6l12 12M18 6L6 18" c={GREY} w={1.3} />,
  s9: <P d="M4 8h12v13H4zM7 11h6v6H7zM12 12l9-9M16 3h5v5" c={GREY} w={1.3} />,
  s10: <P d="M2 9h13v12H2zM5 12h7v6H5zM8 14h13v-8M18 3h3v18" c={GREY} w={1.3} dash="3 1" />,
  s11: (
    <>
      <P d="M3 20h18V4" c={NODE} w={1.5} />
      <P d="M8 16q1-9 10-11v11z" c={RED} f="#9c1c30" />
      <N p="4,20 20,20 20,4" />
    </>
  ),
  s12: (
    <>
      <P d="M4 4h16v16H4z" c="#ddd" />
      <P d="M9 9h6v6H9z" c={RED} w={2} />
      <N p="4,4 20,4 4,20 20,20" c="#bbb" />
      <N p="8,8 16,8 8,16 16,16" />
    </>
  ),

  // design director
  refresh: (
    <>
      <rect x={2} y={1} width={20} height={22} fill="#f4fbf4" />
      <P d="M8 11q0-5 6-5M12 3l4 3-4 3M16 13q0 5-6 5M12 15l-4 3 4 3" c="#2e8a3c" w={2} />
    </>
  ),
  filter: (
    <>
      <P d="M2 9h11l-4 5v6l-2-2v-4z" w={1.5} />
      <P d="M19 3l2 3-2 3-2-3zM19 14l2 3-2 3-2-3z" c="#4450b0" />
    </>
  ),
  filter2: (
    <>
      <P d="M3 3v18M21 3v18" c="#8894d0" w={1.5} />
      <P d="M9 5l2 3-2 3-2-3zM14 14l2 3-2 3-2-3z" c="#4a58c8" />
    </>
  ),
  sun: (
    <>
      <P d="M6 0v12M0 6h12M2 2l8 8M10 2l-8 8" c={YELLOW} w={2} />
      <P d="M14 14l4 4-4 3M19 12l3 5" c="#26309a" w={2} />
    </>
  ),
  delx: <P d="M5 5l14 14M19 5L5 19" c="#aaa" w={4} />,
  ok: <P d="M3 12l6 7L22 5" c="#28d050" w={4} />,
  pick: (
    <>
      <P d="M4 6l4 4M8 4l4 6M12 12l3 3" c="#26309a" w={2} />
      <P d="M16 14v7l2-2 2 2z" f="#fff" w={2} />
    </>
  ),
  list: (
    <>
      <P d="M4 10h16v11H4zM4 14h16M4 17h16M4 10V5l4 3 3-3" w={2} />
      <P d="M20 3v4" c="#26309a" w={2} />
    </>
  ),
  tools: (
    <>
      <P d="M4 3v5l3 3v10M10 3v5l-3 3" w={2} />
      <P d="M13 5v15" c="#888" w={2} />
      <P d="M19 3v8" c={GREEN} w={3} />
      <P d="M19 11v10" w={2} />
    </>
  ),
  layers: <Layers />,
  workplane: <P d="M2 8h13l7 9H9z" c="#5a2a2a" f="#c48a8a" w={1.5} />,
  view: (
    <>
      <P d="M8 8h14v14H8z" c="#aaa" f="#aaa" />
      <P d="M4 4h14v14H4z" c="#23287c" f="#a0a0a8" w={2} />
      <P d="M4 5h14" c="#4c5acc" w={3} />
    </>
  ),
  tcamera: (
    <>
      <P d="M2 7h5l1-3h7l1 3h6v11H2z" c="#1c2a34" f="#4c5e6a" w={1.5} />
      <C x={12} y={12} r={4} c="#111" f="#a8dce8" w={2} />
    </>
  ),
  light: (
    <>
      <P d="M12 1v22M2 3l20 18M22 3L2 21M1 12h22" c="#9a9638" />
      <P d="M12 6l3 5-3 4-3-4z" c="#111" f={YELLOW} w={1.5} />
      <P d="M8 16h8v7H8z" c="#777" f="#c4c29c" />
    </>
  ),
  graphic: (
    <>
      <P d="M9 9h13v13H9z" c="#bbb" f="#bbb" />
      <P d="M4 7l4-4h12v12l-4 4H4z" c="#0a1060" f="#1a2590" w={1.5} />
      <P d="M4 7h12v12" c="#6a78d8" />
    </>
  ),
  category: (
    <>
      <P d="M6 2q-4 0-4 4v12q0 4 4 4M18 2q4 0 4 4v12q0 4-4 4" c="#1a2590" w={2} />
      <P d="M8 5l4-1v7l-5 1zM14 12l5-1v7l-5 2z" c="#1a2590" f="#2c3aa8" w={2} />
    </>
  ),
  eye: (
    <>
      <E x={12} y={12} rx={11} ry={6} c="#a8a8d0" f="#c8c8e4" />
      <C x={12} y={12} r={4} c="#2028a0" f="#141880" w={2} />
    </>
  ),
  tick: <P d="M3 12l6 8L20 4M7 12l3 4" c="#2f9c3c" w={2.5} />,
  padlock: <P d="M4 12h16v9H4zM8 12V7h8v5M2 21h3M19 21h3" c="#b8b0a0" w={2} />,
  palette: (
    <>
      <P d="M4 5q9-6 16 3 3 9-3 13l-4-5-8-3z" c="#fff" f="#f2e8a8" />
      <P d="M8 7h3M13 12h3M8 12h2M15 6h3" c="#222" w={3} />
    </>
  ),
  boxes: (
    <>
      <P d="M3 5l3-3h10v7M3 5h10v9H3z" f="#ddd" w={1.5} />
      <C x={16} y={16} r={6} f="#c8c8c8" c="#555" />
    </>
  ),
  sheet1: (
    <>
      <P d="M4 1h11l6 6v16H4z" f="#fff" />
      <P d="M12 9v9M10 11l2-2M10 18h4" c="#111" w={2} />
    </>
  ),
};

function Icon({ name, className = "size-6" }: { name: string; className?: string }) {
  return (
    <svg viewBox="0 0 24 24" className={`${className} shrink-0`} aria-hidden="true">
      {ICONS[name]}
    </svg>
  );
}

// "^" marks a fly-out tool and "*" the active one
function Tool({ id }: { id: string }) {
  const name = id.replace(/[\^*]/g, "");
  const active = id.includes("*");
  return (
    <button
      aria-label={name}
      className={`size-[30px] shrink-0 border ${active ? "border-[#8a6440] bg-[#2e2a28]/60" : "border-transparent"}`}
    >
      <svg viewBox="0 0 28 28" className="size-7" shapeRendering="crispEdges" aria-hidden="true">
        <g transform="translate(2 2)">{ICONS[name]}</g>
        {id.includes("^") && <path d="M28 24v4h-4z" fill="#fff" />}
      </svg>
    </button>
  );
}

function Grip({ vertical = false }: { vertical?: boolean }) {
  return vertical ? (
    <div className="mb-1 mt-1 flex h-1 w-full shrink-0 justify-center">
      <div className="w-[22px] border-t-2 border-dotted border-[#a8a8a8]" />
    </div>
  ) : (
    <div className="mr-[3px] h-[22px] w-[5px] shrink-0 border-r-2 border-dotted border-[#9a9a9a]" />
  );
}

function Tools({ ids, vertical = false }: { ids: string; vertical?: boolean }) {
  return (
    <>
      {ids.split(" ").map((id, i) =>
        id === "|" ? (
          <div
            key={i}
            className={vertical ? "my-[2px] h-[2px] w-6 shrink-0 bg-[#b8b8b8]" : "mx-[2px] h-[22px] w-[2px] shrink-0 bg-[#c4c4c4]"}
          />
        ) : (
          <Tool key={i} id={id} />
        ),
      )}
    </>
  );
}

const BAR =
  "flex h-full items-center border-r border-b border-t border-r-black border-b-black border-t-[#686868] bg-linear-to-b from-[#2c2d2e] to-[#5e5e5e]";
const SIDE = "flex flex-col items-center border-r border-b border-black bg-linear-to-r from-[#2b2b2b] to-[#606060]";

function ToolBar({ ids, className = "pr-[3px]" }: { ids: string; className?: string }) {
  return (
    <div role="toolbar" className={`${BAR} ${className}`}>
      <Grip />
      <Tools ids={ids} />
    </div>
  );
}

const MENU = [
  { label: "File", width: "w-[34px]" },
  { label: "Edit", width: "w-9" },
  { label: "View", width: "w-[41px]" },
  { label: "Insert", width: "w-[45px]" },
  { label: "Format", width: "w-[54px]" },
  { label: "Tools", width: "w-[45px]" },
  { label: "Draw", width: "w-[43px]" },
  { label: "Dimension", width: "w-[73px]" },
  { label: "Constraints", width: "w-[76px]" },
  { label: "Architecture", width: "w-[81px]" },
  { label: "Modify", width: "w-[54px]" },
  { label: "Modes", width: "w-[52px]" },
  { label: "SDK", width: "w-[37px]" },
  { label: "AddOns", width: "w-[59px]" },
  { label: "Ruby scripts", width: "w-20" },
  { label: "Options", width: "w-[58px]" },
  { label: "Window", width: "w-[60px]" },
  { label: "Help", width: "w-10" },
];

const COMBOS = [
  { label: "Layer", width: "w-[296px]" },
  { label: "Color", width: "w-[99px]" },
  { label: "Pattern", width: "w-[99px]" },
  { label: "Weight", width: "w-[99px]" },
  { label: "Style", width: "w-[117px]" },
  { label: "Pen", width: "w-[99px]" },
];

const FIELDS = [
  { label: "Scale X", value: "1", spin: true },
  { label: "Scale Y", value: "1", spin: true },
  { label: "Size X", value: "0 mm" },
  { label: "Size Y", value: "0 mm" },
  { label: "Pos X", value: "0 mm" },
  { label: "Pos Y", value: "0 mm" },
  { label: "Delta X", value: "0 mm" },
  { label: "Delta Y", value: "0 mm" },
  { label: "Rot", value: "0", spin: true },
];

const TREE = [
  { icon: "layers", label: "Layer (6)", open: true, selected: true },
  { icon: "workplane", label: "WorkPlane" },
  { icon: "view", label: "View (1)" },
  { icon: "tcamera", label: "Camera", open: true },
  { icon: "light", label: "Light (8)", open: true },
  { icon: "graphic", label: "Graphic" },
  { icon: "category", label: "Category" },
];

const LAYERS = [
  { name: "0", active: true, visible: true },
  { name: "Template", visible: true },
  { name: "3D", visible: true },
  { name: "Hidden detail" },
  { name: "2D Hide" },
  { name: "3D Hide" },
];

const PANEL_TABS = [
  { icon: "wdoc", label: "S" },
  { icon: "wcube", label: "M" },
  { icon: "wstar", label: "L" },
  { icon: "gears", label: "D", active: true },
  { icon: "warrow", label: "S" },
  { icon: "wgroup", label: "E" },
  { icon: "wbars", label: "L" },
];

function Combo({ label, width }: { label: string; width: string }) {
  return (
    <div className={`relative mr-px h-[22px] shrink-0 ${width}`}>
      <select aria-label={label} disabled className="h-full w-full appearance-none border border-[#8c8c8c] bg-[#555]">
        <option></option>
      </select>
      <svg viewBox="0 0 6 4" className="absolute right-1 top-[10px] h-1 w-[6px]" aria-hidden="true">
        <path d="M0 0h6L3 4z" fill="#9a9a9a" />
      </svg>
    </div>
  );
}

function ScrollButton({ label, d }: { label: string; d: string }) {
  return (
    <button aria-label={label} className="flex size-4 shrink-0 items-center justify-center border border-black bg-[#262626]">
      <svg viewBox="0 0 8 8" className="size-2" aria-hidden="true">
        <path d={d} fill="#fff" />
      </svg>
    </button>
  );
}

function Pipe({ d, tones }: { d: string; tones: [string, string, string] }) {
  return (
    <g fill="none" strokeLinejoin="round">
      <path d={d} stroke={tones[0]} strokeWidth={11} />
      <path d={d} stroke={tones[1]} strokeWidth={8} />
      <path d={d} stroke={tones[2]} strokeWidth={4} />
    </g>
  );
}

function Leg({ x, y, fill, side, cap }: { x: number; y: number; fill: string; side: string; cap: string }) {
  return (
    <g transform={`translate(${x} ${y})`}>
      <path d="M515 264L536 260Q532 280 536 294Q539 305 543 312Q539 316 533 312Q527 295 523 284Q520 273 515 264Z" fill={fill} />
      <path d="M531 264L536 262Q532 280 536 294Q539 305 543 312L538 314Q530 290 531 264Z" fill={side} />
      <path d="M514 264L536 252L536 262Q530 267 518 266Z" fill={cap} />
    </g>
  );
}

function Model() {
  return (
    <svg
      viewBox="83 144 900 661"
      preserveAspectRatio="xMidYMid slice"
      shapeRendering="crispEdges"
      className="h-full w-full"
      role="img"
      aria-label="Model view"
    >
      <path d="M83 303L136 333L83 363Z" fill="#4b4b4b" />
      <path d="M83 363L136 333V429L83 459Z" fill="#8a8a8a" />
      <Leg x={0} y={0} fill="#858585" side="#5f5f5f" cap="#4f4f4f" />
      <Leg x={-317} y={183} fill="#707070" side="#5c5c5c" cap="#5a5a5a" />
      <Leg x={316} y={183} fill="#747474" side="#404040" cap="#555" />
      <Leg x={0} y={366} fill="#444" side="#5a5a5a" cap="#5e5e5e" />
      <Pipe d="M197 441L290 389" tones={["#4a4a4a", "#666", "#7d7d7d"]} />
      <Pipe d="M535 247L442 300" tones={["#454545", "#5c5c5c", "#727272"]} />
      <Pipe d="M442 299L523 437" tones={["#454545", "#535353", "#616161"]} />
      <Pipe d="M289 389L760 483" tones={["#555", "#707070", "#888"]} />
      <Pipe d="M760 483L852 431" tones={["#454545", "#555", "#666"]} />
      <Pipe d="M523 437L606 574" tones={["#4a4a4a", "#5a5a5a", "#6a6a6a"]} />
      <Pipe d="M607 573L513 626" tones={["#484848", "#555", "#626262"]} />
      <circle cx="443" cy="299" r="5" fill="#555" />
      <circle cx="606" cy="573" r="5" fill="#606060" />
      <ellipse cx="197" cy="441" rx="4" ry="6" fill="#777" stroke="#4a4a4a" transform="rotate(-30 197 441)" />
      <ellipse cx="513" cy="626" rx="4" ry="6" fill="#666" stroke="#444" transform="rotate(-30 513 626)" />
      <ellipse cx="536" cy="247" rx="3" ry="6" fill="#6a6a6a" transform="rotate(-30 536 247)" />
      <ellipse cx="852" cy="431" rx="3" ry="6" fill="#606060" transform="rotate(-30 852 431)" />
      <path
        d="M475 411.500L597.500 398.500L578 465Q576 470 572 472L487 507Q480 510 472 506L412 473Q404 468 410 461L466 416Q470 412 475 411.500Z"
        fill="none"
        stroke="#000"
      />
    </svg>
  );
}

function Canvas() {
  return (
    <main className="grid min-w-0 flex-1 grid-cols-[16px_1fr_17px] grid-rows-[16px_1fr_22px] border-t border-black bg-[#262626]">
      <button aria-label="Origin" className="size-[15px] bg-[#b9b9b0]">
        <svg viewBox="0 0 15 15" className="size-[15px]" aria-hidden="true">
          <path d="M5 3v7h7M3 5l2-3 2 3M10 8l3 2-3 2" fill="none" stroke="#111" />
        </svg>
      </button>
      <div className="flex justify-center border-b border-[#777]">
        <div className="w-px bg-[#00a800]" />
      </div>
      <div />
      <div className="flex flex-col justify-center border-r border-[#777]">
        <div className="h-px bg-[#00a800]" />
      </div>
      <div className="min-h-0 min-w-0 overflow-hidden bg-white">
        <Model />
      </div>
      <div className="flex min-h-0 flex-col bg-linear-to-r from-[#262626] to-[#555]">
        <ScrollButton label="Scroll up" d="M0 6l4-4 4 4z" />
        <div className="flex flex-1 flex-col justify-center pt-[50px]">
          <div className="h-24 w-4 border border-black bg-[#262626]" />
        </div>
        <ScrollButton label="Scroll down" d="M0 2l4 4 4-4z" />
      </div>
      <div />
      <div className="flex items-start">
        <div role="tablist" className="flex w-[165px] shrink-0 items-start gap-[2px] pl-2 text-[12px] leading-[18px]">
          <button role="tab" aria-selected="true" className="flex h-5 w-16 items-center gap-1 rounded-b border-b border-r border-black bg-[#1b1b1b] pl-[6px] text-white">
            <Icon name="boxes" className="size-3" />
            Model
          </button>
          <button role="tab" aria-selected="false" className="flex h-5 w-[70px] items-center gap-1 rounded-b border-b border-r border-black pl-[5px] text-[#8c8c8c]">
            <Icon name="sheet1" className="size-3" />
            Paper 1
          </button>
        </div>
        <div className="h-5 w-[3px] shrink-0 bg-[#e8e8e8]" />
        <div className="ml-px mt-[3px] flex h-4 flex-1 bg-linear-to-b from-[#262626] to-[#5a5a5a]">
          <ScrollButton label="Scroll left" d="M6 0L2 4l4 4z" />
          <div className="flex flex-1 justify-center">
            <div className="ml-[30px] h-4 w-[111px] border border-black bg-[#262626]" />
          </div>
          <ScrollButton label="Scroll right" d="M2 0l4 4-4 4z" />
        </div>
      </div>
      <div />
    </main>
  );
}

function PanelTools({ ids }: { ids: string }) {
  return (
    <div className="flex h-[26px] items-center overflow-hidden bg-linear-to-b from-[#2c2c2c] to-[#5a5a5a] pl-px">
      {ids.split(" ").map((id, i) =>
        id === "|" ? (
          <div key={i} className="mx-px h-6 w-[3px] shrink-0 border-l border-r border-l-black border-r-[#888]" />
        ) : (
          <button key={i} aria-label={id} className="flex h-6 w-[23px] shrink-0 items-center justify-center">
            <span className="flex size-4 items-center justify-center bg-black">
              <Icon name={id} className="size-4" />
            </span>
          </button>
        ),
      )}
    </div>
  );
}

const CELL = "h-[17px] overflow-hidden border-b border-r border-white p-0";
const HEAD = "h-[19px] border-r border-b border-black border-r-[#999] bg-[#262626] p-0 font-normal";

function LayerTable() {
  const blanks = Array.from({ length: 30 });
  return (
    <table className="w-full table-fixed border-separate border-spacing-0 text-left text-white">
      <colgroup>
        <col className="w-[121px]" />
        <col className="w-[26px]" />
        <col className="w-[26px]" />
        <col className="w-[26px]" />
        <col className="w-[26px]" />
        <col />
      </colgroup>
      <thead>
        <tr>
          <th className={`${HEAD} pl-[6px] pt-px`}>Name</th>
          {["tick", "eye", "padlock", "palette"].map((icon) => (
            <th key={icon} className={HEAD}>
              <span className="mx-auto flex size-4 items-center justify-center bg-black">
                <Icon name={icon} className="size-3" />
              </span>
            </th>
          ))}
          <th className={HEAD}></th>
        </tr>
      </thead>
      <tbody>
        {LAYERS.map((layer) => (
          <tr key={layer.name}>
            <td className={CELL}>
              <div className="flex h-4 items-center">
                <span className="flex w-4 shrink-0 justify-center">
                  <Icon name="layers" className="size-[14px]" />
                </span>
                <span className={`h-4 flex-1 pl-1 leading-4 ${layer.active ? "bg-[#7c5532] text-[#1c1006]" : ""}`}>{layer.name}</span>
              </div>
            </td>
            <td className={CELL}>{layer.active && <Icon name="tick" className="mx-auto size-3" />}</td>
            <td className={CELL}>{layer.visible && <Icon name="eye" className="mx-auto size-3" />}</td>
            <td className={CELL}></td>
            <td className={CELL}>
              <div className="mx-auto h-[14px] w-[21px] border border-[#8a8a8a]" />
            </td>
            <td className={CELL}>
              <div className="ml-[2px] h-px bg-white" />
            </td>
          </tr>
        ))}
        {blanks.map((_, i) => (
          <tr key={i}>
            <td className={CELL}></td>
            <td className={CELL}></td>
            <td className={CELL}></td>
            <td className={CELL}></td>
            <td className={CELL}></td>
            <td className={CELL}></td>
          </tr>
        ))}
      </tbody>
    </table>
  );
}

function DesignDirector() {
  return (
    <aside className="ml-1 flex w-[240px] shrink-0 flex-col bg-[#1a1a1a] font-['Roboto',sans-serif] text-[11px]">
      <div className="flex h-[30px] items-center pr-1">
        <Grip />
        <h2 className="ml-[6px] flex-1 font-['Open_Sans','Noto_Sans',sans-serif] text-[14px] text-[#e6e6e6]">Design Director</h2>
        <button aria-label="Pin" className="flex size-4 items-center justify-center">
          <svg viewBox="0 0 8 10" className="h-[10px] w-2" aria-hidden="true">
            <path d="M2 1h4v4H2zM0 5.500h8M4 6v4M5 1v4" stroke="#fff" fill="none" />
          </svg>
        </button>
        <button aria-label="Close" className="flex size-4 items-center justify-center">
          <svg viewBox="0 0 8 8" className="size-2" aria-hidden="true">
            <path d="M0 0l8 8M8 0L0 8" stroke="#fff" strokeWidth={2} />
          </svg>
        </button>
      </div>
      <div className="flex min-h-0 flex-1 flex-col bg-[#585858] px-[3px] pb-[5px] pt-[2px]">
        <PanelTools ids="refresh filter filter2 | sun delx ok | pick list | tools sun" />
        <ul className="mt-[2px] h-[151px] shrink-0 overflow-hidden border border-white bg-black pt-px text-white">
          {TREE.map((node) => (
            <li key={node.label} className="flex h-4 items-center">
              <svg viewBox="0 0 22 16" className="h-4 w-[22px] shrink-0" aria-hidden="true">
                <path
                  d={node.label === "Category" ? "M12.500 0v8" : node.selected ? "M12.500 8v8" : "M12.500 0v16"}
                  stroke="#888"
                  strokeDasharray="1 1"
                />
                <path d="M12.500 8.500h9.500" stroke="#888" strokeDasharray="1 1" />
                {node.open && (
                  <>
                    <rect x="8.500" y="4.500" width="8" height="8" fill="#fff" stroke="#888" />
                    <path d="M10 8.500h5M12.500 6v5" stroke="#111" />
                  </>
                )}
              </svg>
              <span className="size-4 shrink-0 bg-white">
                <Icon name={node.icon} className="size-4" />
              </span>
              <span className={`pl-[3px] leading-4 ${node.selected ? "bg-[#9a6b40] pr-px text-[#24140a]" : ""}`}>{node.label}</span>
            </li>
          ))}
        </ul>
        <div className="mt-1 flex min-h-0 flex-1 flex-col border border-white bg-black">
          <div className="min-h-0 flex-1 overflow-hidden">
            <LayerTable />
          </div>
          <div className="flex h-[17px] shrink-0 items-center bg-[#f0f0f0]">
            <button aria-label="Scroll columns left" className="flex w-[17px] justify-center">
              <svg viewBox="0 0 8 8" className="size-2" aria-hidden="true">
                <path d="M6 0L2 4l4 4" stroke="#444" strokeWidth={2} fill="none" />
              </svg>
            </button>
            <div className="h-[15px] w-14 bg-[#cdcdcd]" />
            <button aria-label="Scroll columns right" className="ml-auto flex w-[17px] justify-center">
              <svg viewBox="0 0 8 8" className="size-2" aria-hidden="true">
                <path d="M2 0l4 4-4 4" stroke="#444" strokeWidth={2} fill="none" />
              </svg>
            </button>
          </div>
        </div>
      </div>
      <div role="tablist" className="flex h-[24px] shrink-0 gap-px border-t border-[#7a5238] bg-[#1a1a1a] px-[3px] pb-1">
        {PANEL_TABS.map((tab, i) => (
          <button
            key={i}
            role="tab"
            aria-selected={!!tab.active}
            className={`flex min-w-0 flex-1 items-center gap-[3px] overflow-hidden pl-1 font-['Open_Sans',sans-serif] ${
              tab.active ? "bg-linear-to-b from-[#b98458] to-[#c29a78] text-[#2a1a0c]" : "bg-linear-to-b from-[#333] to-[#7c7c7c] text-[#d4d4d4]"
            }`}
          >
            <Icon name={tab.icon} className="size-4" />
            {tab.label}
          </button>
        ))}
      </div>
    </aside>
  );
}

function Field({ label, value, spin }: { label: string; value: string; spin?: boolean }) {
  return (
    <label className="flex w-[55px] shrink-0 flex-col text-[12px] leading-4 text-white">
      <span className="pl-px">{label}</span>
      <span className="flex h-[18px] border border-[#8a8a8a] bg-[#2a2a2a]">
        <input disabled defaultValue={value} className="w-0 min-w-0 flex-1 bg-transparent pl-[3px] text-[#707070]" />
        {spin && (
          <svg viewBox="0 0 14 16" className="h-4 w-[14px] shrink-0" aria-hidden="true">
            <path d="M0.500 1h12v6H0.500zM0.500 9h12v6H0.500z" fill="none" stroke="#777" />
            <path d="M5 5l2-2 2 2zM5 11l2 2 2-2z" fill="#aaa" />
          </svg>
        )}
      </span>
    </label>
  );
}

export default function App() {
  return (
    <div className="flex h-screen w-full overflow-hidden bg-[#262626] font-['Open_Sans','Noto_Sans',sans-serif]">
      <div className="flex min-w-0 flex-1 flex-col">
        <nav className="flex h-[26px] shrink-0 items-center border-b-2 border-t border-b-[#6e6e6e] border-t-[#7f95a8] bg-linear-to-b from-[#555] to-[#8b8b8b] text-[12px] text-white">
          <Grip />
          <div className="flex flex-1 pl-[7px]">
            {MENU.map((item) => (
              <button key={item.label} className={`whitespace-nowrap text-left ${item.width}`}>
                {item.label}
              </button>
            ))}
          </div>
          <div className="flex gap-[2px] pr-1">
            {[
              { label: "Minimize", d: "M2 10h7v2H2z" },
              { label: "Restore", d: "M3 1h8v6H9v4H1V5h2zM2 7v3h6V7zM4 3v2h5v1h1V3z" },
              { label: "Close", d: "M1 3l2-2 3 3 3-3 2 2-3 3 3 3-2 2-3-3-3 3-2-2 3-3z" },
            ].map((item) => (
              <button key={item.label} aria-label={item.label} className="flex size-[14px] items-center justify-center">
                <svg viewBox="0 0 12 12" className="size-[10px]" aria-hidden="true">
                  <path d={item.d} fill="#fff" fillRule="evenodd" />
                </svg>
              </button>
            ))}
          </div>
        </nav>

        <div className="h-[33px] shrink-0">
          <ToolBar ids="new open save | print preview | cut copy paste brush | undo redo | zoomin zoomout zoomwin zoomext zoompage zoomsel | abc^ | snapgrid^ | paint*^ section^ | openpc^ cube^ | hand^" />
        </div>

        <div className="flex h-[34px] shrink-0">
          <div role="toolbar" className={`${BAR} pr-[2px]`}>
            <Grip />
            <Tools ids="gear pages" />
            <div className="ml-px flex items-center">
              {COMBOS.map((combo) => (
                <Combo key={combo.label} {...combo} />
              ))}
              <div className="mx-[2px] h-[22px] w-[2px] bg-[#c4c4c4]" />
              <Combo label="Brush" width="w-[99px]" />
              <Combo label="Brush style" width="w-[99px]" />
            </div>
            <Tools ids="mark cup*^" />
          </div>
        </div>

        <div className="flex h-[34px] shrink-0">
          <ToolBar ids="arc1 arc2 arc3 arc4 arc5 arc6 arc7 arc8 arc9 arc10 arc11 arc12 arc13" />
          <ToolBar ids="group group2 group3 stamp" />
          <ToolBar ids="star rect45 ellipses fillet elbow coil flag" />
          <ToolBar ids="arrow* nodearrow handgrab globe" />
          <ToolBar ids="flayer fimage fpage" />
          <ToolBar ids="blocks blocks slabs blocks blocks" />
        </div>

        <div className="flex min-h-0 flex-1">
          <div className="w-8 shrink-0">
            <div role="toolbar" className={SIDE}>
              <Grip vertical />
              <Tools
                vertical
                ids="wbars wgroup warrow wnodes wcup wpalette wsheet wdoc wgears* wcube wstar wtree wroad wpage wfind wlist wmix wcan"
              />
            </div>
          </div>
          <div className="flex w-[35px] shrink-0 flex-col pr-px">
            <div role="toolbar" className={`${SIDE} flex-1`}>
              <Grip vertical />
              <Tools
                vertical
                ids="arrow*^ nodearrow line1^ line2^ circle^ curve^ point^ text^ lock^ copyrect^ | poly3d^ box^ tilt^ dots9^ | dim^ | wall^ | wgroup^ group3^ swap^ | group2"
              />
            </div>
            <div role="toolbar" className={`${SIDE} h-[43px] shrink-0 border-t`}>
              <Grip vertical />
              <Tool id="pins" />
            </div>
          </div>
          <Canvas />
          <DesignDirector />
          <div className="ml-px w-[33px] shrink-0">
            <div role="toolbar" className={SIDE}>
              <Grip vertical />
              <Tools
                vertical
                ids="ushape^ | pins^ split^ | rectrot^ house^ | copies^ | table^ cubes^ cutball^ pen1^ slotball^ chamf^ bar^ blocks^ screw^ plus^ | collapse^ camera^ | group"
              />
            </div>
          </div>
        </div>

        <div className="flex h-[33px] shrink-0">
          <ToolBar
            className="pr-0"
            ids="box polybox sphere fan cone prism tilt spring tilt2 barrel slab glasses cylcut cyl torus mesh plate loft branch stack redpara wirebox punch cubes emboss bluept slotball screw dots9 balls3 balls4 balls5 balls6 balls7 poly3d curve3d spiral3d"
          />
        </div>

        <div className="flex h-[34px] shrink-0 gap-1 pl-[10px]">
          <ToolBar ids="pen1 pen2 pen3 align align2 rotball rings | hyper | chamf chamf2 frame | bend1 bend2 bend3 cone2 bend4 bend5" />
          <ToolBar ids="bool1 bool2 bool3 cutball | add sub inter | pickface frame2 push1 push2 target" />
        </div>

        <div className="h-[41px] shrink-0">
          <div role="toolbar" className={BAR}>
            <Grip />
            {["snap", "cross", "sheet"].map((name) => (
              <button key={name} aria-label={name} className="flex w-[22px] shrink-0 justify-center">
                <Icon name={name} className="size-5" />
              </button>
            ))}
            <div className="mx-[2px] h-6 w-[2px] bg-[#c4c4c4]" />
            <div className="flex">
              {FIELDS.map((field) => (
                <Field key={field.label} {...field} />
              ))}
            </div>
            <div className="mx-[2px] h-6 w-[2px] bg-[#c4c4c4]" />
            {["s1", "s2", "s3", "s4", "s5", "s6", "s7", "s8", "s9", "s10", "s11", "s12"].map((name) => (
              <button key={name} aria-label={name} className="flex w-[22px] shrink-0 justify-center">
                <Icon name={name} className="size-[18px]" />
              </button>
            ))}
          </div>
        </div>
      </div>
      <div className="flex w-[2px] shrink-0 flex-col bg-[#0e3b54]">
        <div className="h-8 bg-[#dfe6ea]" />
      </div>
    </div>
  );
}
